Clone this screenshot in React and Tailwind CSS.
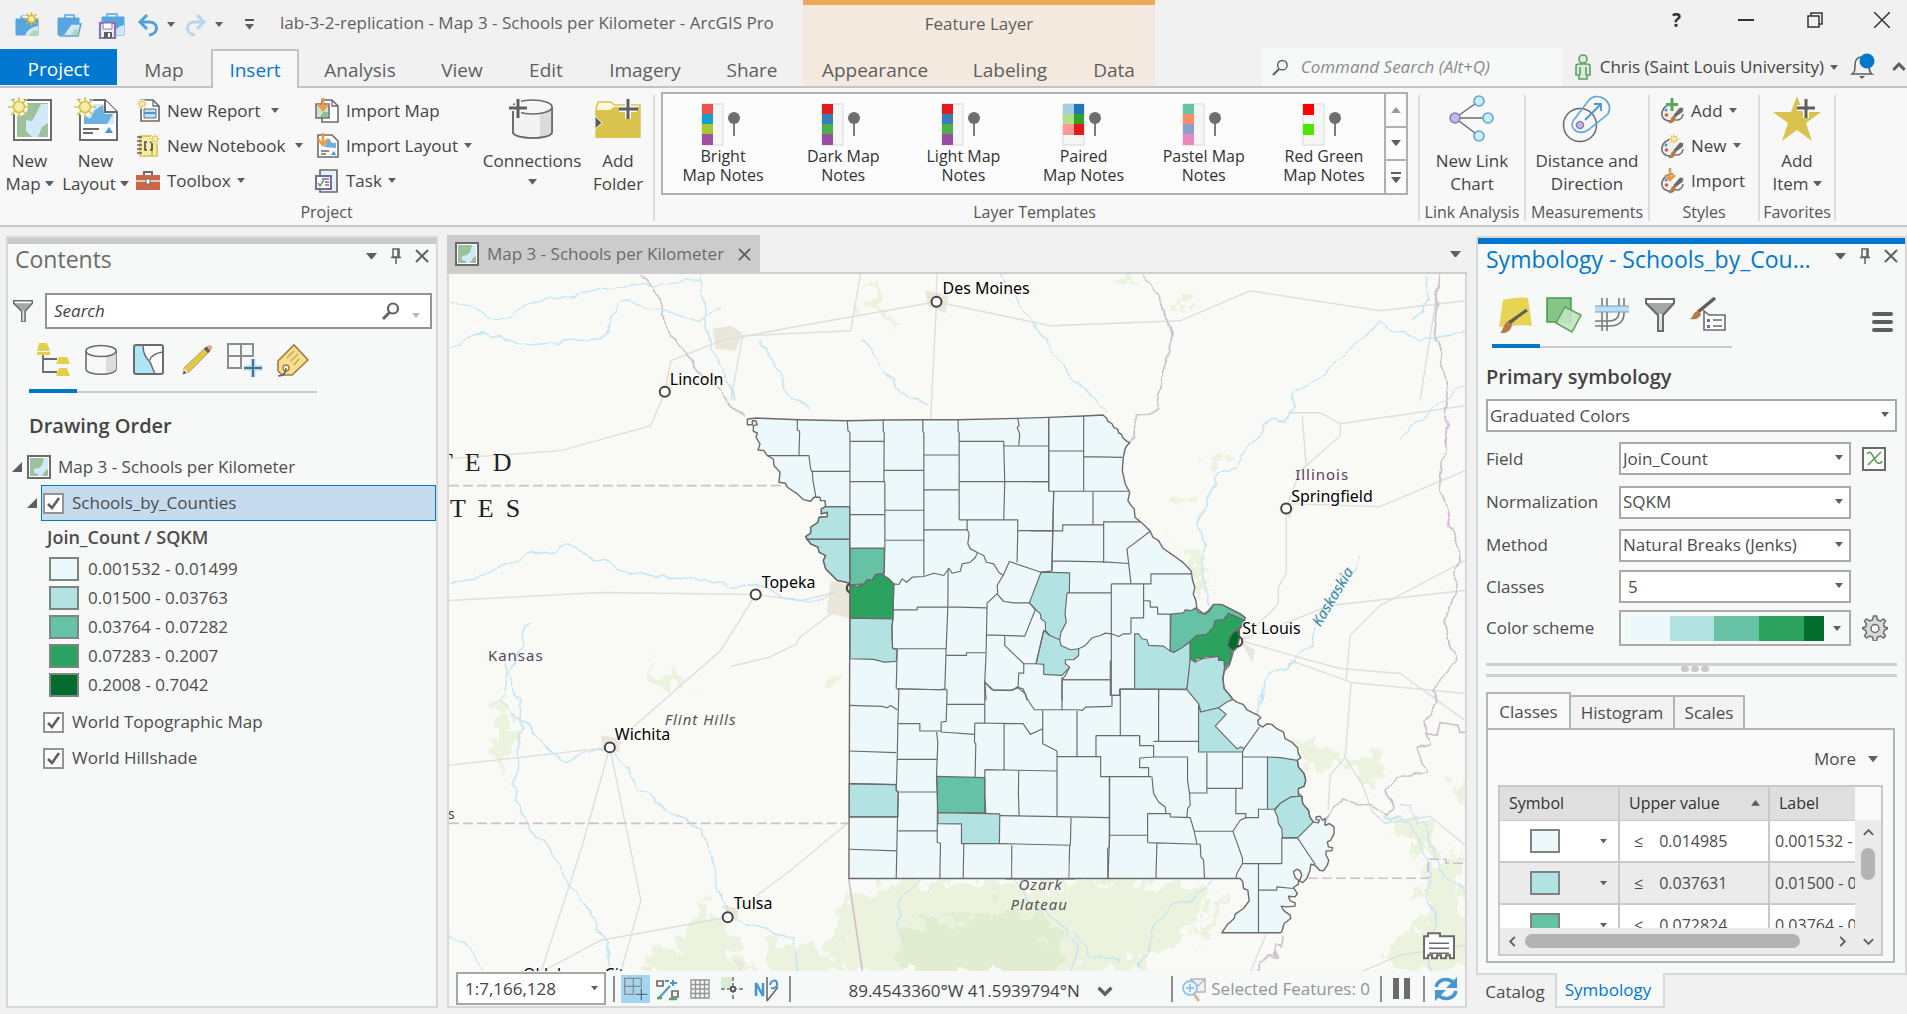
import React from "react";

const UI_FONT = "font-['Open_Sans','Noto_Sans',sans-serif]";

/* ---------- small glyphs ---------- */

const Caret = ({ className = "text-[#5f5f5f]", up = false, size = 8 }) => (
  <svg width={size} height={size * 0.625} viewBox="0 0 8 5" className={"shrink-0 " + className} aria-hidden="true">
    <path d={up ? "M0 5h8L4 0z" : "M0 0h8L4 5z"} fill="currentColor" />
  </svg>
);

const Chevron = ({ turn = "", size = 14, w = 2 }) => (
  <svg width={size} height={size} viewBox="0 0 14 14" className={"shrink-0 text-[#5f5f5f] " + turn} aria-hidden="true">
    <path d="M2 9.5 7 4.500 12 9.500" fill="none" stroke="currentColor" strokeWidth={w} />
  </svg>
);

const CloseX = ({ size = 14, w = 2 }) => (
  <svg width={size} height={size} viewBox="0 0 14 14" className="text-[#5f5f5f]" aria-hidden="true">
    <path d="M1 1 13 13M13 1 1 13" stroke="currentColor" strokeWidth={w} />
  </svg>
);

const Pin = () => (
  <svg width="12" height="16" viewBox="0 0 12 16" className="text-[#5f5f5f]" aria-hidden="true">
    <path d="M3 1h6v8H3zM1 9.500h10M6 10v6M8 1v8" fill="none" stroke="currentColor" strokeWidth="1.500" />
  </svg>
);

const Magnifier = ({ size = 18, w = 2.2 }) => (
  <svg width={size} height={size} viewBox="0 0 18 18" className="shrink-0 text-[#5f5f5f]" aria-hidden="true">
    <circle cx="11" cy="6.500" r="5" fill="none" stroke="currentColor" strokeWidth={w} />
    <path d="M7.500 10.500 1 17" stroke="currentColor" strokeWidth={w + 0.6} />
  </svg>
);

const Sun = ({ x, y, s = 1 }) => (
  <g transform={`translate(${x} ${y}) scale(${s})`}>
    <circle r="9" fill="#f8f8f8" />
    <path d="M0-11V11M-11 0H11M-8-8 8 8M8-8-8 8" stroke="#d9c04a" strokeWidth="1.600" />
    <circle r="5.500" fill="#f6eca9" stroke="#d9c04a" strokeWidth="1.600" />
  </g>
);

/* ---------- quick access icons ---------- */

const ProjectNewIcon = () => (
  <svg width="26" height="26" viewBox="0 0 26 26" aria-hidden="true">
    <path d="M7 7V4h7v3M2 7h22v16H2z" fill="#56a5dd" stroke="#56a5dd" />
    <path d="M8 6V4h6v2z" fill="#f1f1f1" />
    <path d="M11 24c1-5 6-9 13-10v10z" fill="#cfe7f7" />
    <path d="M15 24l4-6 5 1v5z" fill="#b9d6b4" />
    <g transform="translate(17.500 7)">
      <path d="M0-7V7M-7 0H7M-5-5 5 5M5-5-5 5" stroke="#d9b93a" strokeWidth="1.500" />
      <circle r="3.500" fill="#fbeeb0" stroke="#d9b93a" strokeWidth="1.500" />
    </g>
  </svg>
);
const ProjectOpenIcon = () => (
  <svg width="26" height="26" viewBox="0 0 26 26" aria-hidden="true">
    <path d="M9 6V3h9v3" fill="none" stroke="#56a5dd" strokeWidth="1.500" />
    <path d="M2 6h21v6H9L4 23H2z" fill="#56a5dd" stroke="#56a5dd" />
    <path d="M8 12h17l-3 12H4z" fill="#cfe7f7" stroke="#56a5dd" strokeWidth="1.500" />
    <path d="M8 12h8l-8 11H4z" fill="#56a5dd" />
    <path d="M15 23l4-6 4 1-1 5z" fill="#b9d6b4" />
  </svg>
);
const SaveIcon = () => (
  <svg width="28" height="28" viewBox="0 0 28 28" aria-hidden="true">
    <path d="M9 6V3h10v3" fill="none" stroke="#56a5dd" strokeWidth="1.500" />
    <path d="M4 6h22v18H4z" fill="#56a5dd" stroke="#56a5dd" />
    <path d="M15 24c2-6 6-9 11-10v10z" fill="#cfe7f7" />
    <path d="M2 12h15v15H2z" fill="#f1f1f1" stroke="#8c72b5" strokeWidth="2.200" />
    <path d="M5 12h9v6H5z" fill="#fff" stroke="#8c72b5" />
    <path d="M6 21h8v6H6z" fill="#5f5f5f" />
    <path d="M10 22h2v4h-2z" fill="#fff" />
  </svg>
);
const UndoIcon = ({ color, flip }) => (
  <svg width="22" height="24" viewBox="0 0 22 24" className={flip ? "-scale-x-100" : ""} aria-hidden="true">
    <path d="M3 9h9c10 0 10 12 0 13" fill="none" stroke={color} strokeWidth="3" />
    <path d="M10 2 3 9l7 7" fill="none" stroke={color} strokeWidth="3" />
  </svg>
);

/* ---------- ribbon icons ---------- */

const MapPageIcon = ({ size = 44 }) => (
  <svg width={size} height={size} viewBox="0 0 44 44" aria-hidden="true">
    <path d="M6 3h37v40H6z" fill="#fff" stroke="#6b6b6b" strokeWidth="2" />
    <path d="M9 6h31v34H9z" fill="#9cc29d" />
    <path d="M40 7H33l-4 8-5 9-6-1v11l6 6h6l4-10 6-4z" fill="#d3e9f8" />
    <Sun x={11} y={10} />
  </svg>
);
const LayoutPageIcon = ({ size = 44 }) => (
  <svg width={size} height={size} viewBox="0 0 44 44" aria-hidden="true">
    <path d="M6 3h25l12 12v28H6z" fill="#fff" stroke="#6b6b6b" strokeWidth="2" />
    <path d="M10 7h20v9h10v11H10z" fill="#d3e9f8" />
    <path d="M10 18l6 4 5-9 8-5 1 9 9 0-6 10H10z" fill="#69b1e2" />
    <path d="M31 3v12h12" fill="#fff" stroke="#6b6b6b" strokeWidth="2" />
    <path d="M9 32h16M9 36h10" stroke="#6b6b6b" strokeWidth="1.800" />
    <path d="M31 36h8l-4-6z" fill="#4795d1" />
    <Sun x={11} y={10} />
  </svg>
);
const ReportIcon = () => (
  <svg width="25" height="25" viewBox="0 0 25 25" aria-hidden="true">
    <path d="M5 2h12l6 6v15H5z" fill="#fff" stroke="#6b6b6b" strokeWidth="1.700" />
    <path d="M17 2v6h6" fill="none" stroke="#6b6b6b" strokeWidth="1.300" />
    <path d="M8 11h12v9H8z" fill="#bfe0f5" stroke="#6b6b6b" />
    <path d="M8 15h12" stroke="#4795d1" strokeWidth="2" />
    <Sun x={6} y={6} s={0.500} />
  </svg>
);
const NotebookIcon = () => (
  <svg width="25" height="25" viewBox="0 0 25 25" aria-hidden="true">
    <path d="M4 3h17v20H4z" fill="#f6eca9" stroke="#d9c04a" strokeWidth="1.600" />
    <path d="M16 3v20" stroke="#d9c04a" strokeWidth="2" />
    <path d="M1 4h5M1 8h5M1 12h5M1 16h5M1 20h5" stroke="#5f5f5f" strokeWidth="1.600" />
    <path d="M11 9H9v8h2M14 9h2v8h-2" fill="none" stroke="#444" strokeWidth="1.500" />
    <Sun x={19} y={6} s={0.500} />
  </svg>
);
const ToolboxIcon = () => (
  <svg width="26" height="22" viewBox="0 0 26 22" aria-hidden="true">
    <path d="M9 6V2h8v4" fill="none" stroke="#6b6b6b" strokeWidth="2" />
    <path d="M1 5h24v15H1z" fill="#c86848" />
    <path d="M1 11h24" stroke="#f8e4dc" strokeWidth="1.500" />
    <path d="M11 9h4v5h-4z" fill="#fff" stroke="#6b6b6b" />
  </svg>
);
const ImportArrow = () => <path d="M9 0v11M4 6l5 6 5-6" fill="none" stroke="#ea9a45" strokeWidth="2.600" />;
const ImportMapIcon = () => (
  <svg width="26" height="26" viewBox="0 0 26 26" aria-hidden="true">
    <path d="M8 2h10l6 6v16H8z" fill="#fff" stroke="#6b6b6b" strokeWidth="1.600" />
    <path d="M18 2v6h6" fill="none" stroke="#6b6b6b" strokeWidth="1.300" />
    <path d="M2 6h13v14H2z" fill="#cde3cc" stroke="#6b6b6b" strokeWidth="1.500" />
    <path d="M6 19l3-5 5 0v5z" fill="#8fc08f" />
    <ImportArrow />
  </svg>
);
const ImportLayoutIcon = () => (
  <svg width="26" height="26" viewBox="0 0 26 26" aria-hidden="true">
    <path d="M4 2h14l6 6v16H4z" fill="#fff" stroke="#6b6b6b" strokeWidth="1.600" />
    <path d="M10 14l5-9 3 5h4v5z" fill="#69b1e2" />
    <path d="M7 18h8M7 21h5" stroke="#6b6b6b" strokeWidth="1.300" />
    <path d="M17 22h5l-2-4z" fill="#4795d1" />
    <ImportArrow />
  </svg>
);
const TaskIcon = () => (
  <svg width="26" height="26" viewBox="0 0 26 26" aria-hidden="true">
    <path d="M6 2h17v22H6z" fill="#e7f2f9" stroke="#6b6b6b" strokeWidth="1.700" />
    <path d="M2 8h15v13H2z" fill="#fff" stroke="#7b66ad" strokeWidth="2" />
    <path d="M4 15l2 3 4-6" fill="none" stroke="#59a55b" strokeWidth="1.500" />
    <path d="M8 11h7M11 14h4M11 17h4" stroke="#7b66ad" strokeWidth="1.300" />
  </svg>
);
const ConnectionsIcon = () => (
  <svg width="46" height="42" viewBox="0 0 46 42" aria-hidden="true">
    <path d="M4 9v25c0 8 39 8 39 0V9" fill="#f3f3f3" stroke="#6b6b6b" strokeWidth="1.700" />
    <path d="M31 15v24c8-1 12-3 12-5V9c0 3-5 5-12 6z" fill="#dcdcdc" />
    <ellipse cx="23.500" cy="9" rx="19.500" ry="7" fill="#f6f6f6" stroke="#6b6b6b" strokeWidth="1.700" />
    <path d="M4 9v25c0 8 39 8 39 0V9" fill="none" stroke="#6b6b6b" strokeWidth="1.700" />
    <path d="M9 2v17M1 10h17" stroke="#f8f8f8" strokeWidth="6" />
    <path d="M9 1v19M0 10h18" stroke="#5f5f5f" strokeWidth="3" />
  </svg>
);
const FolderIcon = () => (
  <svg width="48" height="42" viewBox="0 0 48 42" aria-hidden="true">
    <path d="M2 11l2-7h13l3 3h26v32H2z" fill="#fdf9e3" stroke="#d9c34c" strokeWidth="1.500" />
    <path d="M2 12h14l4-3h26v31H2z" fill="#d9c34c" />
    <path d="M1 18v13l7-6z" fill="#5f5f5f" stroke="#f8f8f8" />
    <path d="M34 2v19M25 11h18" stroke="#f8f8f8" strokeWidth="6" />
    <path d="M34 1v20M25 11h19" stroke="#5f5f5f" strokeWidth="3" />
  </svg>
);
const LinkChartIcon = () => (
  <svg width="46" height="48" viewBox="0 0 46 48" aria-hidden="true">
    <path d="M6 23 30 6M6 23h32M6 23l24 18" stroke="#6b6b6b" strokeWidth="1.500" />
    <circle cx="6" cy="23" r="5" fill="#c4b8e0" stroke="#8c7bbd" strokeWidth="1.500" />
    <g fill="#d3ebf9" stroke="#5aa7dc" strokeWidth="1.600">
      <circle cx="30" cy="6" r="5" />
      <circle cx="39" cy="23" r="5" />
      <circle cx="30" cy="41" r="5" />
    </g>
  </svg>
);
const DistanceIcon = () => (
  <svg width="50" height="50" viewBox="0 0 50 50" aria-hidden="true">
    <circle cx="18" cy="31" r="16.500" fill="none" stroke="#6b6b6b" strokeWidth="1.500" />
    <path d="M11 27 27 6c8-9 26 1 19 14L26 36c-9 6-19-1-15-9z" fill="none" stroke="#5aa7dc" strokeWidth="1.600" />
    <circle cx="18" cy="31" r="3.500" fill="#c4b8e0" stroke="#8c7bbd" strokeWidth="1.600" />
    <path d="M23 26 39 10M32 10h7v7" fill="none" stroke="#4795d1" strokeWidth="1.800" />
  </svg>
);
const PaletteIcon = ({ kind }) => (
  <svg width="25" height="26" viewBox="0 0 25 26" aria-hidden="true">
    <path d="M14 23C5 24 1 20 2 14 3 9 8 6 13 6" fill="#efefef" stroke="#6b6b6b" strokeWidth="1.600" />
    <circle cx="6" cy="12" r="1.500" fill="#4795d1" />
    <circle cx="6.500" cy="17" r="1.800" fill="#d1633f" />
    <path d="M13 17 20 9l4 1-1 4-8 6z" fill="#6b6b6b" stroke="#f8f8f8" strokeWidth=".8" />
    <path d="M15 22c5 1 8-3 8-6" fill="none" stroke="#6b6b6b" strokeWidth="1.400" />
    <path d="M14 17l-3 3c0 3-1 4-3 5 5 1 7-2 8-6z" fill="#b17c48" />
    {kind === "add" && <path d="M12 0v13M6 6.500h12" stroke="#59a55b" strokeWidth="3" />}
    {kind === "new" && <Sun x={14} y={6} s={0.500} />}
    {kind === "import" && <path d="M10 0v11M5 7l5 5 5-5" fill="none" stroke="#ea9a45" strokeWidth="2.600" />}
  </svg>
);
const StarIcon = () => (
  <svg width="48" height="48" viewBox="0 0 48 48" aria-hidden="true">
    <path d="M24 1l6 16h18L33 28l6 18-15-11L9 46l6-18L0 17h18z" fill="#d9c34c" />
    <path d="M33 5v18M24 13h18" stroke="#f8f8f8" strokeWidth="6" />
    <path d="M33 4v19M24 13h18" stroke="#5f5f5f" strokeWidth="3" />
  </svg>
);
const NotesIcon = ({ left, right }) => (
  <svg width="44" height="44" viewBox="0 0 44 44" aria-hidden="true">
    <path d="M1 1h21v41H1z" fill="#f6f6f6" stroke="#e2e2e2" strokeWidth="1.500" />
    {left.map((c, i) => c && <rect key={c} x="1" y={1 + i * 10} width="11" height="11" fill={c} />)}
    {right.map((c, i) => <rect key={c} x="12" y={1 + i * 10} width="10" height="11" fill={c} />)}
    <circle cx="33" cy="15" r="6" fill="#6d6e71" />
    <path d="M33 15v18" stroke="#6d6e71" strokeWidth="1.800" />
  </svg>
);

/* ---------- shared panel icons ---------- */

const MapThumb = () => (
  <svg width="24" height="24" viewBox="0 0 24 24" className="shrink-0" aria-hidden="true">
    <path d="M1 1h22v22H1z" fill="#fff" stroke="#6b6b6b" strokeWidth="2" />
    <path d="M3 3h18v18H3z" fill="#9cc29d" />
    <path d="M21 3h-4l-2 7-3 3-5 1v4l4 1v2h4l3-5 3-2z" fill="#d3e9f8" />
  </svg>
);
const Funnel = ({ size = 26 }) => (
  <svg width={size} height={(size * 34) / 30} viewBox="0 0 30 34" className="shrink-0" aria-hidden="true">
    <path d="M1 1h28v4L18 17v16h-5V17L1 5z" fill="#fff" stroke="#6b6b6b" strokeWidth="2" />
    <path d="M2 5h26L18 16h-5z" fill="#a5a7ab" />
    <path d="M13 17h5v15h-5z" fill="#e2e2e2" />
    <path d="M1 1h28v4L18 17v16h-5V17L1 5z" fill="none" stroke="#6b6b6b" strokeWidth="2" />
  </svg>
);

/* ---------- contents tabs ---------- */

const OrderIcon = () => (
  <svg width="36" height="36" viewBox="0 0 36 36" aria-hidden="true">
    <path d="M8 11v19h14M8 17h14" fill="none" stroke="#6b6b6b" strokeWidth="1.800" />
    <path d="M4 1h8l3 8H2zM2 10h13v3H2zM24 15h8l3 7H21zM24 26h8l3 8H21z" fill="#e3cf4e" />
  </svg>
);
const SourceIcon = () => (
  <svg width="32" height="32" viewBox="0 0 32 32" aria-hidden="true">
    <path d="M1 7v18c0 7 30 7 30 0V7" fill="#f8f8f8" stroke="#6b6b6b" strokeWidth="1.600" />
    <path d="M21 11v18c7-1 10-3 10-4V7c0 2-4 4-10 4z" fill="#dcdcdc" />
    <ellipse cx="16" cy="7" rx="15" ry="5.500" fill="#f8f8f8" stroke="#6b6b6b" strokeWidth="1.600" />
  </svg>
);
const SelectionIcon = () => (
  <svg width="32" height="32" viewBox="0 0 32 32" aria-hidden="true">
    <rect x="1" y="1" width="29" height="29" rx="2" fill="#fbfbfb" />
    <path d="M2 2h8c0 8 3 12 7 16l5 12H2z" fill="#afe6f6" />
    <path d="M10 1c0 9 3 13 7 17l5 12M17 16c1-4 6-7 13-8" fill="none" stroke="#6b6b6b" strokeWidth="1.500" />
    <rect x="1" y="1" width="29" height="29" rx="2" fill="none" stroke="#6b6b6b" strokeWidth="2" />
  </svg>
);
const PencilIcon = () => (
  <svg width="32" height="32" viewBox="0 0 32 32" aria-hidden="true">
    <path d="M3 24 25 3l4 4L8 28l-6 2z" fill="#dfc84c" stroke="#a98f3b" strokeWidth=".8" />
    <path d="M23 5l3-3 4 4-3 3z" fill="#5f5f5f" />
    <path d="M26 3l2-2c2 0 4 2 3 4l-2 2z" fill="#eba29a" />
    <path d="M3 24l5 4-6 2z" fill="#f2d8b0" />
    <path d="M2 30l1-3 2 2z" fill="#333" />
  </svg>
);
const SnapIcon = ({ size = 36 }) => (
  <svg width={size} height={size} viewBox="0 0 36 36" aria-hidden="true">
    <path d="M1 2h25v12H1zM1 2v24h13V2" fill="none" stroke="#8e8e8e" strokeWidth="2" />
    <path d="M26 17v18M17 26h18" stroke="#a9dbf7" strokeWidth="5" />
    <path d="M26 17v18M17 26h18" stroke="#4a6f8a" strokeWidth="2" />
  </svg>
);
const TagIcon = () => (
  <svg width="34" height="34" viewBox="0 0 34 34" aria-hidden="true">
    <path d="M2 18 18 2l14 15-16 15H6l-4-4z" fill="#f4e08e" stroke="#a9793c" strokeWidth="1.600" />
    <path d="M11 15l7-7M15 18l7-7M18 22l5-6" stroke="#cf9c62" strokeWidth="1.300" />
    <circle cx="10" cy="25" r="3" fill="#fff" stroke="#a9793c" strokeWidth="1.400" />
    <path d="M10 25c0 6-4 8-8 8" fill="none" stroke="#5f5f5f" strokeWidth="1.500" />
  </svg>
);

/* ---------- symbology tabs ---------- */

const PrimaryIcon = () => (
  <svg width="36" height="36" viewBox="0 0 36 36" aria-hidden="true">
    <path d="M5 3c8-2 17-3 25-2l4 28c-10-2-20 0-33 1z" fill="#e8d454" />
    <path d="M29 13 12 28l-3-3z" fill="#5f5f5f" />
    <path d="M29 13 12 25" stroke="#5f5f5f" strokeWidth="3" />
    <path d="M11 25c-6 0-5 8-9 11 6 1 11-2 12-8z" fill="#b17c48" />
  </svg>
);
const VaryIcon = () => (
  <svg width="38" height="36" viewBox="0 0 38 36" aria-hidden="true">
    <path d="M2 1h24v24H2z" fill="#86c487" stroke="#3f9a4b" strokeWidth="1.500" />
    <path d="M20 10 36 18 27 35 11 26z" fill="#c3e3c2" fillOpacity=".9" stroke="#59a55b" strokeWidth="1.500" />
  </svg>
);
const LayerDrawIcon = () => (
  <svg width="36" height="36" viewBox="0 0 36 36" aria-hidden="true">
    <path d="M8 1v33M13 1v33M25 1v14q0 9-11 9H1M30 1v15q0 13-15 13H1" fill="none" stroke="#7a7a7a" strokeWidth="1.600" />
    <path d="M1 9h34v6H1z" fill="#b9def5" />
    <path d="M1 9h34M1 15h34" stroke="#7a9fb8" strokeWidth="1" />
  </svg>
);
const LegendBrushIcon = () => (
  <svg width="38" height="36" viewBox="0 0 38 36" aria-hidden="true">
    <path d="M26 1 9 15" stroke="#5f5f5f" strokeWidth="3.500" />
    <path d="M10 14c-6 0-5 5-9 8 6 1 10-1 11-5z" fill="#b17c48" />
    <path d="M15 14v19h21V18H20z" fill="#fff" stroke="#6b6b6b" strokeWidth="1.600" />
    <path d="M24 23h9M24 29h9" stroke="#6b6b6b" strokeWidth="1.400" />
    <path d="M18 22h3v3h-3zM18 28h3v3h-3z" fill="#7b66ad" />
  </svg>
);

/* ---------- ribbon building blocks ---------- */

const BigButton = ({ icon, lines, drop, className = "" }) => (
  <button className={"flex shrink-0 flex-col items-center text-[17px] leading-[23px] text-[#444] " + className}>
    <span className="mb-[6px] flex h-[48px] items-center justify-center">{icon}</span>
    <span>{lines[0]}</span>
    {lines[1] ? (
      <span className="flex items-center gap-1">
        {lines[1]}
        {drop && <Caret size={9} />}
      </span>
    ) : (
      <span className="flex h-[20px] items-center"><Caret size={9} /></span>
    )}
  </button>
);

const SmallButton = ({ icon, label, drop, wide }) => (
  <button className="flex h-[35px] items-center gap-[6px] text-[17px] text-[#444]">
    <span className="flex w-[26px] justify-center">{icon}</span>
    <span className="whitespace-nowrap">{label}</span>
    {drop && <Caret className={wide ? "ml-1 text-[#5f5f5f]" : "text-[#5f5f5f]"} />}
  </button>
);

const Group = ({ label, children, className = "", bodyClass = "" }) => (
  <section className={"mt-[7px] mb-[4px] flex flex-col border-r-2 border-[#dcdcdc] " + className}>
    <div className={"flex min-h-0 flex-1 " + bodyClass}>{children}</div>
    <h2 className="h-[18px] text-center text-base leading-[18px] whitespace-nowrap text-[#555]">{label}</h2>
  </section>
);

const GALLERY = [
  { lines: ["Bright", "Map Notes"], left: ["#f05050", "#149fd1", "#a8c82f", "#a050a0"], right: [] },
  { lines: ["Dark Map", "Notes"], left: ["#e41a1c", "#377eb8", "#4daf4a", "#984ea3"], right: [] },
  { lines: ["Light Map", "Notes"], left: ["#e41a1c", "#377eb8", "#4daf4a", "#984ea3"], right: [] },
  { lines: ["Paired", "Map Notes"], left: ["#a6cee3", "#b2df8a", "#fb9a99"], right: ["#1f78b4", "#33a02c", "#e31a1c"] },
  { lines: ["Pastel Map", "Notes"], left: ["#66c2a5", "#fc8d62", "#8da0cb", "#e78ac3"], right: [] },
  { lines: ["Red Green", "Map Notes"], left: ["#ff0000", null, "#4ce600"], right: [] },
];

/* ---------- header ---------- */

const TABS = [
  ["Map", "w-[94px]"],
  ["Insert", "w-[88px]"],
  ["Analysis", "w-[122px]"],
  ["View", "w-[82px]"],
  ["Edit", "w-[86px]"],
  ["Imagery", "w-[112px]"],
  ["Share", "w-[102px]"],
];

function Header() {
  return (
    <header className="flex h-[88px] bg-[#f1f1f1] text-[#5f5f5f]">
      <div className="flex w-[803px] shrink-0 flex-col">
        <div className="flex h-[49px] items-center pl-[14px]">
          <button aria-label="New project" className="w-[42px]"><ProjectNewIcon /></button>
          <button aria-label="Open project" className="w-[42px]"><ProjectOpenIcon /></button>
          <button aria-label="Save project" className="w-[39px]"><SaveIcon /></button>
          <button aria-label="Undo" className="flex w-[48px] items-center gap-[8px]"><UndoIcon color="#4f9fd9" /><Caret /></button>
          <button aria-label="Redo" className="flex w-[60px] items-center gap-[8px]"><UndoIcon color="#b9d7ec" flip /><Caret /></button>
          <button aria-label="Customize toolbar" className="flex w-[35px] flex-col gap-[3px]">
            <span className="h-[2px] w-[9px] bg-[#555]" />
            <Caret size={9} />
          </button>
          <h1 className="pb-1 text-[17px] whitespace-nowrap">lab-3-2-replication - Map 3 - Schools per Kilometer - ArcGIS Pro</h1>
        </div>
        <nav className="flex flex-1 border-b-2 border-[#c3c3c3] text-[19px]">
          <button className="mb-px w-[117px] bg-[#0078d0] pt-1 text-white">Project</button>
          {TABS.map(([t, w]) =>
            t === "Insert" ? (
              <button key={t} className={w + " -mb-[2px] border-2 border-b-0 border-[#c3c3c3] bg-[#f8f8f8] pt-[2px] text-[#0078d0]"}>{t}</button>
            ) : (
              <button key={t} className={w + " pt-[6px]"}>{t}</button>
            )
          )}
        </nav>
      </div>
      <div className="flex w-[352px] shrink-0 flex-col border-t-[5px] border-[#f0a858] bg-[#f3e9de]">
        <div className="flex h-[44px] items-center justify-center pb-[6px] text-[17px]">Feature Layer</div>
        <nav className="flex flex-1 border-b-2 border-[#c3c3c3] text-[19px]">
          <button className="w-[144px] pt-[6px]">Appearance</button>
          <button className="w-[126px] pt-[6px]">Labeling</button>
          <button className="w-[82px] pt-[6px]">Data</button>
        </nav>
      </div>
      <div className="flex min-w-0 flex-1 flex-col">
        <div className="flex h-[48px] items-center justify-end pb-2">
          <button aria-label="Help" className="w-[69px] text-[19px] font-bold text-[#333]">?</button>
          <button aria-label="Minimize" className="flex w-[69px] justify-center"><span className="h-[2px] w-4 bg-[#333]" /></button>
          <button aria-label="Restore" className="flex w-[69px] justify-center">
            <svg width="16" height="16" viewBox="0 0 16 16"><path d="M1 4h11v11H1zM4 4V1h11v11h-3" fill="none" stroke="#333" strokeWidth="1.500" /></svg>
          </button>
          <button aria-label="Close" className="flex w-[58px] justify-center pl-[8px]">
            <svg width="16" height="16" viewBox="0 0 16 16"><path d="M0 0l16 16M16 0 0 16" stroke="#333" strokeWidth="1.500" /></svg>
          </button>
        </div>
        <div className="flex flex-1 items-start justify-end border-b-2 border-[#c3c3c3] text-[17px]">
          <label className="flex h-[38px] w-[300px] items-center gap-3 bg-[#f7f9f8] pl-[10px]">
            <Magnifier size={17} w={1.6} />
            <input aria-label="Command Search" placeholder="Command Search (Alt+Q)" className="w-full min-w-0 bg-transparent italic outline-none placeholder:text-[#8a8a8a]" />
          </label>
          <button className="ml-[12px] flex h-[38px] items-center text-[#444]">
            <svg width="18" height="26" viewBox="0 0 18 26" className="mr-2" aria-hidden="true">
              <circle cx="9" cy="5" r="4" fill="#d9ecd6" stroke="#5f9f63" strokeWidth="1.600" />
              <path d="M2 12q0-2 3-2h8q3 0 3 2v9h-3v4H5v-4H2zM6 13v8M12 13v8" fill="#d9ecd6" stroke="#5f9f63" strokeWidth="1.600" />
            </svg>
            <span className="mr-[6px] whitespace-nowrap">Chris (Saint Louis University)</span>
            <Caret />
          </button>
          <button aria-label="Notifications" className="ml-3 flex h-[36px] items-center">
            <svg width="26" height="28" viewBox="0 0 26 28">
              <path d="M2 22h20c-3-2-3-5-3-9 0-6-2-8-7-8s-7 3-7 8 0 7-3 9z" fill="none" stroke="#5f5f5f" strokeWidth="1.500" />
              <path d="M9 24h6l-3 3z" fill="#5f5f5f" />
              <circle cx="17" cy="9" r="7.500" fill="#007ac8" />
            </svg>
          </button>
          <button aria-label="Collapse ribbon" className="ml-[15px] flex h-[38px] items-center"><Chevron size={16} w={2.6} /></button>
        </div>
      </div>
    </header>
  );
}

/* ---------- ribbon ---------- */

function Ribbon() {
  return (
    <div className="flex h-[139px] overflow-hidden border-b-2 border-[#c8c8c8] bg-[#f8f8f8]">
      <Group label="Project" className="w-[655px] shrink-0">
        <BigButton className="w-[59px]" icon={<MapPageIcon />} lines={["New", "Map"]} drop />
        <BigButton className="w-[73px]" icon={<LayoutPageIcon />} lines={["New", "Layout"]} drop />
        <div className="-mt-[2px] flex w-[179px] shrink-0 flex-col pl-[3px]">
          <SmallButton icon={<ReportIcon />} label="New Report" drop wide />
          <SmallButton icon={<NotebookIcon />} label="New Notebook" drop wide />
          <SmallButton icon={<ToolboxIcon />} label="Toolbox" drop />
        </div>
        <div className="-mt-[2px] flex w-[168px] shrink-0 flex-col pl-[3px]">
          <SmallButton icon={<ImportMapIcon />} label="Import Map" />
          <SmallButton icon={<ImportLayoutIcon />} label="Import Layout" drop />
          <SmallButton icon={<TaskIcon />} label="Task" drop />
        </div>
        <BigButton className="w-[106px]" icon={<ConnectionsIcon />} lines={["Connections"]} />
        <BigButton className="w-[66px]" icon={<FolderIcon />} lines={["Add", "Folder"]} />
      </Group>
      <Group label="Layer Templates" className="min-w-0 max-w-[765px] flex-1 pr-[10px] pl-[6px]">
        <div className="-mt-[3px] flex h-[103px] w-full border-2 border-[#b0b0b0] bg-[#fcfcfc]">
          <div className="grid min-w-0 flex-1 grid-cols-6 overflow-hidden">
            {GALLERY.map((g) => (
              <button key={g.lines.join(" ")} className="flex flex-col items-center pt-[9px] text-base leading-[19px] whitespace-nowrap text-[#333]">
                <NotesIcon left={g.left} right={g.right} />
                <span>{g.lines[0]}</span>
                <span>{g.lines[1]}</span>
              </button>
            ))}
          </div>
          <div className="flex w-[22px] flex-col divide-y-2 divide-[#b0b0b0] border-l-2 border-[#b0b0b0]">
            <button aria-label="Previous templates" className="flex flex-1 items-center justify-center"><Caret up size={10} className="text-[#999]" /></button>
            <button aria-label="Next templates" className="flex flex-1 items-center justify-center"><Caret size={10} /></button>
            <button aria-label="All templates" className="flex flex-1 flex-col items-center justify-center gap-[3px]">
              <span className="h-[2px] w-[10px] bg-[#5f5f5f]" />
              <Caret size={10} />
            </button>
          </div>
        </div>
      </Group>
      <Group label="Link Analysis" className="w-[106px] shrink-0" bodyClass="justify-center">
        <BigButton icon={<LinkChartIcon />} lines={["New Link", "Chart"]} />
      </Group>
      <Group label="Measurements" className="w-[124px] shrink-0" bodyClass="justify-center">
        <BigButton icon={<DistanceIcon />} lines={["Distance and", "Direction"]} />
      </Group>
      <Group label="Styles" className="w-[110px] shrink-0" bodyClass="-mt-[2px] flex-col pl-[9px]">
        <SmallButton icon={<PaletteIcon kind="add" />} label="Add" drop />
        <SmallButton icon={<PaletteIcon kind="new" />} label="New" drop />
        <SmallButton icon={<PaletteIcon kind="import" />} label="Import" />
      </Group>
      <Group label="Favorites" className="w-[76px] shrink-0" bodyClass="justify-center">
        <BigButton icon={<StarIcon />} lines={["Add", "Item"]} drop />
      </Group>
    </div>
  );
}

/* ---------- panes ---------- */

const PaneButtons = () => (
  <div className="flex h-[24px] items-center gap-[13px]">
    <button aria-label="Pane options"><Caret size={11} /></button>
    <button aria-label="Auto hide"><Pin /></button>
    <button aria-label="Close pane"><CloseX /></button>
  </div>
);

const IconTabs = ({ items }) => (
  <div className="flex items-end">
    {items.map(([label, icon], i) => (
      <button key={label} aria-label={label} className={"flex h-[52px] w-[48px] items-start justify-center " + (i === 0 ? "border-b-4 border-[#0079c8]" : "border-b-2 border-[#cacaca]")}>
        <span className="flex h-[38px] items-center">{icon}</span>
      </button>
    ))}
  </div>
);

const Check = ({ label, className = "" }) => (
  <label className={"flex items-center gap-[8px] " + className}>
    <span className="relative flex h-[21px] w-[21px]">
      <input type="checkbox" defaultChecked className="peer h-[21px] w-[21px] appearance-none border-2 border-[#949494] bg-white" />
      <svg viewBox="0 0 21 21" className="pointer-events-none absolute inset-0 hidden peer-checked:block" aria-hidden="true">
        <path d="M5 11l4 4 7-10" fill="none" stroke="#5f5f5f" strokeWidth="2.600" />
      </svg>
    </span>
    {label}
  </label>
);

const Expander = () => (
  <svg width="10" height="10" viewBox="0 0 10 10" className="shrink-0" aria-hidden="true"><path d="M10 0v10H0z" fill="#5f5f5f" /></svg>
);

const CLASSES = [
  ["bg-[#ecf8fa]", "0.001532 - 0.01499", "0.014985"],
  ["bg-[#b2e2e2]", "0.01500 - 0.03763", "0.037631"],
  ["bg-[#66c2a4]", "0.03764 - 0.07282", "0.072824"],
  ["bg-[#2ca25f]", "0.07283 - 0.2007", "0.2007"],
  ["bg-[#006d2c]", "0.2008 - 0.7042", "0.7042"],
];

function Contents() {
  return (
    <aside className="flex w-[432px] shrink-0 flex-col border-2 border-[#d8d8d8] bg-[#f7f9f8] text-[17px] text-[#4c4c4c]">
      <div className="h-[6px] shrink-0 bg-[#cacaca]" />
      <div className="flex h-[49px] justify-between pr-[7px] pl-[7px]">
        <h2 className="text-[23px] leading-[30px] text-[#6b6b6b]">Contents</h2>
        <PaneButtons />
      </div>
      <div className="flex items-center gap-3 pr-1 pl-[5px]">
        <Funnel size={20} />
        <div className="flex h-[36px] min-w-0 flex-1 items-center border-2 border-[#949494] bg-white pr-[10px] pl-[7px]">
          <input aria-label="Search" placeholder="Search" className="min-w-0 flex-1 italic outline-none placeholder:text-[#444]" />
          <button aria-label="Run search" className="mr-[12px]"><Magnifier /></button>
          <button aria-label="Search options" className="pt-2"><Caret className="text-[#bbb]" /></button>
        </div>
      </div>
      <div className="pt-[12px] pl-[21px]">
        <IconTabs items={[["List by drawing order", <OrderIcon key="a" />], ["List by source", <SourceIcon key="b" />], ["List by selection", <SelectionIcon key="c" />], ["List by editing", <PencilIcon key="d" />], ["List by snapping", <SnapIcon key="e" />], ["List by labeling", <TagIcon key="f" />]]} />
      </div>
      <h3 className="pt-[18px] pl-[21px] text-[20px] leading-[30px] font-semibold text-[#444]">Drawing Order</h3>
      <div className="mt-[8px] flex h-[36px] items-center gap-[5px] pl-[4px]">
        <Expander />
        <MapThumb />
        <span className="pl-[2px]">Map 3 - Schools per Kilometer</span>
      </div>
      <div className="flex h-[36px] items-center gap-[4px] pl-[19px]">
        <Expander />
        <Check label="Schools_by_Counties" className="h-full flex-1 border border-[#0079c8] bg-[#c6dbee] pl-px" />
      </div>
      <h4 className="pl-[39px] text-[18px] leading-[33px] font-semibold">Join_Count / SQKM</h4>
      <ul>
        {CLASSES.map(([bg, label]) => (
          <li key={label} className="flex h-[29px] items-center gap-[9px] pl-[41px]">
            <span className={"h-[24px] w-[30px] border-2 border-[#7d8583] " + bg} />
            {label}
          </li>
        ))}
      </ul>
      <div className="pt-[5px] pl-[35px]">
        <Check label="World Topographic Map" className="h-[36px]" />
        <Check label="World Hillshade" className="h-[36px]" />
      </div>
    </aside>
  );
}

/* ---------- map drawing ---------- */

// Every county sheet has its own origin on a shared grid of a third of a unit.
const shift = (dx, dy, pts) =>
  pts.trim().split(/\s+/).map((p) => {
    const [x, y] = p.split(",").map(Number);
    return `${x + dx},${y + dy}`;
  }).join(" ");

const OUTLINE = [
  shift(0, 0, "50,55 78,52 202,57 350,60 458,58 577,57 683,57 860,53 955,50 1060,46 1118,43"),
  shift(900, 0, "228,52 233,62 246,70 250,80 262,85 265,97 273,100 278,112 290,122 298,125 285,142 279,170 276,210 285,250 298,275 293,300 300,312 312,325 314,350 340,372 360,392 368,410 385,420 398,443 430,465 460,487 483,512 487,540 494,560 489,580 497,600 500,624 520,640 535,630 550,612 575,612 600,625 630,640 645,652 640,665 632,680 625,690 628,710 622,740 610,752 605,770 597,795 583,810 578,835 582,865 600,885 608,897"),
  shift(1050, 780, "470,125 490,133 500,148 520,158 535,165 542,172 533,180 535,192 548,200 560,190 575,192 590,205 610,215 615,235 635,245 652,262 655,280 662,292 652,300 655,320 672,340 677,360 672,378 655,385 655,400 665,408 668,430 685,450 690,472 700,485 715,488 718,480 708,478 708,470 720,468 727,480 735,475 735,495 748,490 762,500 762,520 752,540 742,545 745,560 758,562 755,572 738,572 738,585 746,600 742,615 730,632 718,630 705,615 692,612 690,630 680,655 668,667 658,662 665,645 660,632 650,627 640,635 645,652 655,660 655,672 640,682 652,700 645,710 625,708 630,722 645,728 645,738 620,740 603,738 612,752 630,765 632,775 612,790 605,815 600,818 425,818 440,795 462,775 465,762 490,745 507,722 503,690 490,685 488,665 480,655 467,655"),
  shift(0, 0, "355,1435 358,550 345,545 320,540 300,520 285,505 278,480 285,465 265,455 262,440 240,430 225,408 240,398 240,380 262,365 265,350 290,348 290,335 272,340 272,325 285,318 283,300 270,300 268,290 250,290 240,302 218,297 200,280 170,260 165,248 145,245 148,215 130,195 128,175 110,165 100,150 82,148 88,130 76,110 80,97 68,92 68,75 80,72 75,60 65,60 65,72 50,72"),
].join(" ");

const SHADED = [
  ["#b2e2e2", shift(0, 0, "285,318 357,318 357,416 228,416 225,408 240,398 240,380 262,365 265,350 290,348 290,335 272,340 272,325")],
  ["#b2e2e2", shift(0, 0, "228,416 357,416 357,548 345,545 320,540 300,520 285,505 278,480 285,465 265,455 262,440 240,430")],
  ["#66c2a4", shift(0, 0, "358,443 461,443 461,520 455,520 435,522 425,540 410,538 400,550 358,553")],
  ["#2ca25f", shift(0, 0, "358,553 380,558 400,550 410,538 425,540 435,522 455,520 465,530 475,535 490,550 487,655 358,653")],
  ["#b2e2e2", shift(0, 0, "358,653 487,655 484,680 486,743 500,748 497,783 460,785 430,777 358,775")],
  ["#b2e2e2", shift(900, 0, "32,515 118,517 117,577 110,577 104,640 108,665 92,695 88,718 70,715 58,705 45,690 45,665 32,655 30,640 15,627 -3,607")],
  ["#b2e2e2", shift(900, 0, "40,690 58,705 88,718 92,735 120,748 145,745 145,765 130,778 105,778 105,790 118,800 95,825 40,822 40,792 17,790")],
  ["#b2e2e2", shift(900, 0, "313,700 325,700 335,715 350,718 355,735 400,737 420,752 432,755 480,725 480,790 470,868 313,866")],
  ["#66c2a4", shift(900, 0, "422,641 460,637 465,628 485,630 495,622 505,635 525,642 540,630 550,612 575,612 600,625 630,640 645,652 640,662 620,650 595,640 580,658 555,660 550,680 530,702 500,705 480,722 455,742 432,755 420,752")],
  ["#b2e2e2", shift(900, 0, "480,775 495,785 515,775 565,768 565,780 582,780 583,802 578,830 582,865 608,897 590,905 565,922 512,935 505,910 470,868")],
  ["#2ca25f", shift(900, 0, "595,638 620,650 645,662 632,680 615,688 600,710 592,735 605,755 600,785 583,802 582,780 565,780 565,768 525,768 515,775 500,773 495,785 480,775 480,722 500,705 530,702 550,680 555,660 580,658")],
  ["#006d2c", shift(900, 0, "610,695 628,685 628,705 620,740 608,752 592,735 600,708")],
  ["#66c2a4", shift(300, 780, "318,348 463,352 463,400 466,458 322,457")],
  ["#b2e2e2", shift(300, 780, "322,457 508,461 507,550 393,550 393,491 322,490")],
  ["#b2e2e2", shift(300, 780, "56,370 197,373 197,390 203,395 202,470 56,470")],
  ["#b2e2e2", shift(1050, 780, "362,155 415,142 438,162 405,197 470,265 482,260 492,265 487,275 355,275 355,135")],
  ["#b2e2e2", shift(1050, 780, "562,290 600,292 652,300 655,320 672,340 677,360 672,378 655,385 655,408 632,410 600,430 583,447 562,447")],
  ["#b2e2e2", shift(1050, 780, "583,450 600,430 632,410 665,408 668,430 685,450 690,472 700,485 680,505 652,533 607,533 605,505 595,490 592,470")],
];

const COUNTY_LINES = [
  ["", "M200,57V88L207,92 205,165M110,165H235L240,205 245,212 247,240 256,290M242,212H357M350,60L352,90 358,95V545M458,58V92L461,95 460,240 463,245V440L461,520M577,57V92L580,97V525M683,57V92L686,95V358M862,53L866,75 860,80 868,100 865,135M955,50V272M358,122H460M358,243H463M358,342H463M358,443H461M461,209H580M463,329H580M463,419H580M580,163H686M580,268L686,267M580,388H710M686,122H820V136H955M820,136L823,243 820,358M686,243H955M686,358H862V392L860,485M862,390H970M970,272L965,512M285,318H357M228,416H357M710,360V385L716,400 712,430 720,445 745,458 760,465 768,485 790,490 805,515 818,525M358,553L380,558 400,550 410,538 425,540 435,522 455,520 475,535 490,550 505,552 515,535 528,545 545,530 580,528 610,518 640,525 655,503 665,518 690,512 695,490 720,485 735,470 740,458M490,550L487,655 484,680 486,743 500,748 497,865M487,628H560V620H650M653,503L652,620 647,745 643,865M486,745H647M653,619L768,622M837,483L818,525 800,555 802,578 770,608 767,755M800,580L820,603 850,607 897,607 915,627 883,707 768,703M837,483L932,515M823,707V735L880,790M940,690L917,790M647,765H708V757H767L763,845 767,900M503,865L630,868 643,865M917,790H880V818H865L863,862 885,880 890,900M763,845L785,868 840,870 863,862"],
  ["translate(900 0)", "M55,50V272M160,46V272M55,151H160M160,168L276,170M55,272H297M0,243H55M0,391H97V373H220M70,272L67,391 64,510M188,275V373M330,364H220V487M64,481L220,484 295,489M360,392L290,445 302,548M483,520H362V550H243M340,550V600L360,602V620H382V641H420V752M340,600V652H302V700M32,515L64,512M243,550V885M118,577H243M145,745L165,735 185,712 210,705 225,698 243,700 265,708 280,700 300,700M95,838H240M118,800L105,825 95,838V900M243,885H268V866H313M385,868V900"],
  ["translate(300 780)", "M55,135L155,138 170,142 180,135 200,148M199,85L205,88 202,190 200,297 197,390 203,395 200,512 197,655M199,85L330,88 350,88M345,85L350,90 347,183 332,185V215M350,132H463M463,60V187M433,188L578,190 600,222 637,205M433,188L432,245 436,250 434,350M332,215L432,222M202,190H268V212H332M318,215L322,245 318,345 321,395 320,545 330,550 328,655M55,272L197,277M200,297H318M55,370L197,373M203,395H320M55,470H200M203,512H320M55,567L198,572M463,328L680,332M463,328V460M521,190V328M565,330L564,400 566,465M508,466L837,472M722,471L720,555M507,550L720,555M400,550L398,655M544,555V655M718,555L715,655M837,350V560L832,565 833,655M680,272V470M637,150V250L680,272M680,289H811V349H963M463,65L490,90 545,90 560,80 578,85 590,115 612,148H740L757,150 765,140 843,138M697,58H840M695,50V150M740,152V289M797,289V226H928V256"],
  ["translate(1050 780)", "M90,0V105H120M95,105V138M120,226V86H320M235,88V243M178,226V256H220V290M220,243H355M178,293V322H205V349M178,293L220,290H322V360L328,400M328,398H380V278M380,384H487V275M487,290H562M562,447H535V472H497V460H467V384M652,533L705,612M652,533H605V610H487M215,349L220,400 235,425 255,440 257,458M202,547V460H270V470L330,472 342,513 350,550M320,470L322,445 330,435 328,398M202,547L360,552M342,513H458M497,472L480,480 458,513 475,560 487,595V610L470,640 467,655M535,610V818M535,690H590V680L640,685M360,552L362,590 370,600 373,655M230,547L227,655M88,350V525H202M88,525L83,655M492,265L538,200"],
];

const CITIES = [
  ["Des Moines", 936, 301, 942, 293],
  ["Lincoln", 664, 391, 669, 384],
  ["Springfield", 1286, 508, 1291, 501],
  ["Topeka", 755, 594, 761, 587],
  ["St Louis", 1237, 641, 1242, 634],
  ["Wichita", 609, 747, 614, 740],
  ["Tulsa", 727, 917, 733, 909],
];

function MapCanvas() {
  return (
    <svg viewBox="448 273 1017 698" preserveAspectRatio="xMidYMid slice" className="absolute inset-0 h-full w-full font-['Noto_Sans','Open_Sans',sans-serif]" role="img" aria-label="Map of Missouri counties shaded by schools per square kilometer">
      <defs>
        <filter id="ragged" x="-10%" y="-10%" width="120%" height="120%">
          <feTurbulence type="fractalNoise" baseFrequency="0.06" numOctaves="3" seed="4" result="n" />
          <feDisplacementMap in="SourceGraphic" in2="n" scale="48" xChannelSelector="R" yChannelSelector="G" />
        </filter>
        <filter id="winding" x="-5%" y="-5%" width="110%" height="110%">
          <feTurbulence type="fractalNoise" baseFrequency="0.05" numOctaves="2" seed="9" result="n" />
          <feDisplacementMap in="SourceGraphic" in2="n" scale="14" xChannelSelector="R" yChannelSelector="G" />
        </filter>
      </defs>
      <rect x="448" y="273" width="1017" height="699" fill="#f9f9f6" />

      <g filter="url(#ragged)" fill="#ebf2de">
        <path d="M850 895 900 880 1000 885 1120 878 1215 890 1200 915 1170 940 1130 975 810 975 838 930z" />
        <path d="M900 925 1010 905 1060 930 1050 975 900 975z" fill="#e0edd0" />
        <path d="M700 900 730 935 760 985 640 985 655 950 690 940z" />
        <path d="M770 940 830 950 800 985 770 985z" />
        <path d="M1215 905 1190 950 1210 930 1230 895z" />
        <path d="M1300 745 1320 740 1330 755 1390 755 1370 790 1340 760 1310 775z" />
        <path d="M1420 880 1450 850 1465 860 1465 975 1400 975 1380 960 1420 930z" />
        <path d="M1385 825 1420 810 1440 850 1420 860z" />
        <path d="M1450 785 1470 780 1470 820z" />
        <path d="M1205 450 1225 462 1215 475zM1170 500 1195 492 1190 505zM1155 520 1180 548 1170 540zM1185 550 1202 553 1205 605 1195 590z" />
        <path d="M1100 273 1140 280 1130 290zM860 278 880 300 900 330 870 310zM1180 290 1190 310 1175 300z" />
        <path d="M500 690 520 730 500 780 495 740zM650 660 690 690 655 690zM820 680 845 675 840 690z" />
      </g>
      <g fill="#eae7da">
        <path d="M712 328 730 325 742 332 735 350 715 348z" />
        <path d="M830 580 848 584 850 618 826 612z" />
        <path d="M660 385 672 382 670 396zM600 735 620 738 618 752 602 750zM720 905 738 908 736 922zM732 958 744 962 740 972z" />
        <path d="M925 290 948 294 945 312 928 306zM1240 640 1255 650 1252 662zM1278 505 1294 507 1290 518z" />
      </g>

      <g fill="none" stroke="#dedede" strokeWidth="1.400">
        <path d="M448 458 560 450 650 425 664 391 670 360 720 340 800 325 936 301 1050 325 1180 320 1250 290 1380 310 1465 300" />
        <path d="M936 273V301L930 420" />
        <path d="M448 600 600 592 755 594 800 600 835 592" />
        <path d="M755 594 720 650 609 747 580 850 540 972" />
        <path d="M730 666 768 657 795 644 800 636 835 610" />
        <path d="M448 765 609 747M609 747 640 900 620 972M727 917 790 870 848 822M727 917 600 940 540 972" />
        <path d="M1286 508V573L1278 587V603L1270 612 1240 640" />
        <path d="M1286 508 1300 470 1306 465 1302 415M1306 465 1340 435V423L1465 405M1340 423 1320 412 1288 412M1286 503 1380 506 1465 470" />
        <path d="M1240 640 1310 660 1340 668 1400 673 1465 720M1240 640 1330 605 1465 590M1346 680 1350 635 1380 605 1465 560" />
        <path d="M1290 660 1346 680 1351 682 1345 757 1330 775 1328 810M1351 682 1465 693M1345 757 1362 784 1372 811 1385 823 1430 816 1465 845" />
        <path d="M1266 934 1250 972M1360 972 1400 955 1465 945" />
        <path d="M860 273 850 330 742 335M742 335 730 400" />
        <path d="M1440 273 1420 400" />
      </g>

      <g fill="none" stroke="#c4e5f3" strokeWidth="1.400" filter="url(#winding)">
        <path d="M448 350 480 330 520 345 600 338 620 300 700 320 720 310" />
        <path d="M448 300 500 318 540 300 640 285 700 280" />
        <path d="M448 585 560 545 640 575 700 580 755 585 795 600 818 600 835 588" />
        <path d="M530 620 500 700 560 760 609 747 640 790 700 830 727 917 790 940 800 972" />
        <path d="M505 665 520 700 515 800 560 870 600 930 610 972" />
        <path d="M448 934 470 950 480 972M700 273 705 330 735 400" />
        <path d="M860 340 900 390 930 405M760 340 790 390 810 412M1000 273 1050 350 1105 412" />
        <path d="M1293 400 1285 418 1265 425 1235 467 1220 472 1203 500 1198 523 1203 540 1202 590 1208 604" />
        <path d="M1465 330 1420 340 1380 320 1293 400" />
        <path d="M1360 553 1355 570 1318 622 1310 645 1290 662 1272 672 1262 680 1260 700 1258 716" />
        <path d="M1465 385 1420 420 1400 440M1425 273 1430 300 1410 320" />
        <path d="M1383 817 1400 817 1420 840 1430 875 1428 900 1437 925 1430 972M1400 803 1412 803 1414 823 1426 823 1440 870 1465 889" />
        <path d="M920 880 900 895 898 920 905 945M1013 878 1030 900 1050 912 1075 945 1072 972" />
        <path d="M1214 880 1190 900 1168 906 1150 935 1140 965M1075 935 1090 955 1120 960" />
      </g>

      <g fill="none" stroke="#cdc1cf" strokeWidth="1.700">
        <g filter="url(#winding)">
          <path d="M640 273 660 300 667 335 685 352 700 375 720 388 730 405 745 418" />
          <path d="M1143 273 1160 300 1172 325 1170 350 1157 400 1155 408 1137 415 1133 422 1134 438 1129 442" />
          <path d="M1456 660 1432 690 1437 700 1427 720 1425 733 1427 740 1417 750 1425 768 1395 777 1387 792 1393 807 1390 815 1370 808 1345 798 1333 808 1325 825" />
          <path d="M1456 660 1445 620 1460 560 1440 480 1450 400 1435 330 1440 273" />
          <path d="M1282 935 1285 945 1277 945 1278 958 1260 962V972" />
        </g>
        <path d="M448 485H808M448 823H848" strokeDasharray="10 4" />
        <path d="M848 878 862 972M1425 733 1437 735 1440 722 1458 725 1460 732H1465" />
        <path d="M1308 878H1428V859H1446V863H1465" strokeDasharray="10 4" />
      </g>

      <g transform="translate(730 400) scale(0.3333)" strokeLinejoin="round">
        <polygon points={OUTLINE} fill="#ecf8fa" />
        <g stroke="#6b6b6b" strokeWidth="3.500">
          {SHADED.map(([fill, pts]) => <polygon key={pts} points={pts} fill={fill} />)}
        </g>
        <g fill="none" stroke="#6b6b6b" strokeWidth="3.500">
          {COUNTY_LINES.map(([t, d]) => <path key={d} transform={t || undefined} d={d} />)}
          <polygon points={OUTLINE} strokeWidth="4.200" />
        </g>
      </g>

      <g fill="#fff" stroke="#444" strokeWidth="2">
        {CITIES.filter(([n]) => n !== "St Louis").map(([n, x, y]) => <circle key={n} cx={x} cy={y} r="5" />)}
        <path d="M1238 636a5 5 0 0 1-2 10" fill="none" />
        <path d="M849 583a5 5 0 0 0 0 9" fill="none" />
      </g>
      <g fontSize="16" fill="#000" stroke="#fff" strokeWidth="3" strokeOpacity=".7" paintOrder="stroke">
        {CITIES.map(([n, , , tx, ty]) => <text key={n} x={tx} y={ty}>{n}</text>)}
        <text x="522" y="980">Oklahoma City</text>
      </g>
      <g fontSize="15" fill="#5a4060" letterSpacing="1">
        <text x="1295" y="479">Illinois</text>
        <text x="487" y="661">Kansas</text>
      </g>
      <g fontSize="15" fill="#555" fontStyle="italic" letterSpacing="1">
        <text x="664" y="725">Flint Hills</text>
        <text x="1018" y="890">Ozark</text>
        <text x="1010" y="910">Plateau</text>
      </g>
      <path d="M1012 860h56v17h-56z" fill="#ecf8fa" />
      <path d="M1005 878.500H1075" stroke="#6b6b6b" strokeWidth="1.500" />
      <text transform="translate(1320 627) rotate(-59)" fontSize="15" fontStyle="italic" fill="#3a86a8">Kaskaskia</text>
      <g className="font-['Liberation_Serif',serif]" fontSize="26" fill="#222" letterSpacing="12">
        <text x="436" y="470">TED</text>
        <text x="449" y="516">TES</text>
      </g>
      <text x="447" y="819" fontSize="14" fill="#444">s</text>
      <g>
        <path d="M1424 936h4v-3h12v3h14v22h-4v-3h-4v3h-5v-3h-4v3h-5v-3h-4v3h-4z" fill="#fff" stroke="#6b6b6b" strokeWidth="2" />
        <path d="M1429 943h20M1429 948h20M1429 953h20" stroke="#6b6b6b" strokeWidth="1.600" />
      </g>
    </svg>
  );
}

const Bar = () => <span className="h-[26px] w-[2px] shrink-0 bg-[#8e8e8e]" />;

function MapView() {
  return (
    <main className="flex min-w-0 flex-1 flex-col">
      <div className="flex h-[38px] shrink-0 items-center justify-between border-b-2 border-[#cfcfcf] pr-[6px]">
        <div className="flex h-[38px] items-center gap-[8px] bg-[#cccccc] pr-[9px] pl-[8px] text-[17px] text-[#6b6b6b]">
          <MapThumb />
          <span className="whitespace-nowrap">Map 3 - Schools per Kilometer</span>
          <button aria-label="Close map" className="ml-[6px]"><CloseX size={13} /></button>
        </div>
        <button aria-label="Open views"><Caret size={11} /></button>
      </div>
      <div className="flex min-h-0 flex-1 flex-col border-2 border-t-0 border-[#d8d8d8] bg-[#f7f9f8]">
        <div className="relative min-h-0 flex-1 overflow-hidden"><MapCanvas /></div>
        <div className="flex h-[35px] shrink-0 items-center pl-[7px] text-[17px] text-[#444]">
          <div className="relative h-[33px] w-[150px] shrink-0">
            <select aria-label="Map scale" className="h-full w-full appearance-none border-2 border-[#a6a6a6] bg-white pl-[7px] text-[17px]"><option>1:7,166,128</option></select>
            <span className="pointer-events-none absolute top-[14px] right-[8px]"><Caret size={7} /></span>
          </div>
          <div className="flex items-center pl-[7px]">
            <Bar />
            <button aria-label="Snapping" className="ml-[6px] flex h-[28px] w-[29px] items-center justify-center bg-[#a3d4f2]"><SnapIcon size={24} /></button>
            <button aria-label="Dynamic constraints" className="ml-[6px]">
              <svg width="24" height="24" viewBox="0 0 24 24">
                <path d="M1 4h6v5H1zM16 14h6v6h-6z" fill="none" stroke="#6b6b6b" strokeWidth="1.700" />
                <path d="M2 22 14 9M9 4h4M17 3v6M14 6h7" stroke="#4795d1" strokeWidth="2" />
                <path d="M1 21h5M13 22h8" stroke="#59a55b" strokeWidth="2.500" />
              </svg>
            </button>
            <button aria-label="Grid" className="ml-[10px]">
              <svg width="20" height="20" viewBox="0 0 20 20"><path d="M1 1h18v18H1zM5.500 1v18M10 1v18M14.500 1v18M1 5.500h18M1 10h18M1 14.500h18" fill="none" stroke="#949494" strokeWidth="1.400" /></svg>
            </button>
            <button aria-label="Inference" className="ml-[11px]">
              <svg width="24" height="24" viewBox="0 0 24 24">
                <path d="M0 0h11v11H0z" fill="#dcebd6" />
                <path d="M12 0v24M0 12h24" stroke="#6b6b6b" strokeWidth="1.500" strokeDasharray="4 2" />
                <path d="M10 10h4v4h-4z" fill="#fff" stroke="#444" strokeWidth="1.500" />
              </svg>
            </button>
            <button aria-label="Map correction" className="ml-[9px]">
              <svg width="26" height="26" viewBox="0 0 26 26">
                <path d="M2 20V7l7 13V7" fill="none" stroke="#4795d1" strokeWidth="2.600" />
                <path d="M13 1v24M13 25 24 11" stroke="#6b6b6b" strokeWidth="1.600" />
                <path d="M16 9c1-5 6-6 7-2s-3 6-6 5" fill="none" stroke="#4795d1" strokeWidth="2" />
              </svg>
            </button>
            <span className="ml-[9px] flex"><Bar /></span>
          </div>
          <div className="flex min-w-0 flex-1 items-center justify-center gap-4 pt-1">
            <span className="whitespace-nowrap">89.4543360°W 41.5939794°N</span>
            <button aria-label="Coordinate format"><Chevron turn="rotate-180" size={18} w={2.6} /></button>
          </div>
          <div className="flex shrink-0 items-center pr-[6px]">
            <Bar />
            <button className="ml-[8px] flex items-center gap-1 text-[#949494]">
              <svg width="26" height="26" viewBox="0 0 26 26" aria-hidden="true">
                <path d="M10 3h14v13H13z" fill="#eef2f3" stroke="#b7b7b7" strokeWidth="1.500" />
                <path d="M10 3l7 7 7-7" fill="none" stroke="#b7b7b7" strokeWidth="1.300" />
                <circle cx="9" cy="12" r="7" fill="#eef6fb" stroke="#94c4e6" strokeWidth="1.800" />
                <path d="M9 8v8M5 12h8" stroke="#94c4e6" strokeWidth="1.800" />
                <path d="M13 18l5 7" stroke="#d9b98f" strokeWidth="3" />
              </svg>
              <span className="whitespace-nowrap">Selected Features: 0</span>
            </button>
            <span className="ml-[10px] flex"><Bar /></span>
            <button aria-label="Pause drawing" className="ml-[11px] flex gap-[5px]">
              <span className="h-[21px] w-[6px] bg-[#6b6b6b]" />
              <span className="h-[21px] w-[6px] bg-[#6b6b6b]" />
            </button>
            <span className="ml-[13px] flex"><Bar /></span>
            <button aria-label="Refresh" className="ml-[8px]">
              <svg width="26" height="26" viewBox="0 0 26 26">
                <path d="M3 11C5 3 15 1 21 7M23 15c-2 8-12 10-18 4" fill="none" stroke="#4795d1" strokeWidth="3.600" />
                <path d="M24 1v11H13zM2 25V14h11z" fill="#4795d1" />
              </svg>
            </button>
          </div>
        </div>
      </div>
    </main>
  );
}

/* ---------- symbology ---------- */

const Combo = ({ id, value, indent }) => (
  <div className="relative h-[33px]">
    <select id={id} className={"h-full w-full appearance-none border-2 border-[#a9a9a9] bg-white text-[17px] " + (indent ? "pl-[7px]" : "pl-[2px]")}>
      <option>{value}</option>
    </select>
    <span className="pointer-events-none absolute top-[13px] right-[8px]"><Caret /></span>
  </div>
);

const FieldRow = ({ id, label, value, height, indent, side }) => (
  <div className={"grid grid-cols-[133px_minmax(0,1fr)_46px] items-center " + height}>
    <label htmlFor={id}>{label}</label>
    <Combo id={id} value={value} indent={indent} />
    <div className="pl-[11px]">{side}</div>
  </div>
);

function Symbology() {
  return (
    <aside className="flex w-[431px] shrink-0 flex-col text-[17px] text-[#4c4c4c]">
      <div className="flex min-h-0 flex-1 flex-col border-2 border-[#d8d8d8] bg-[#f7f9f8]">
        <div className="h-[6px] shrink-0 bg-[#0078d0]" />
        <div className="flex h-[52px] shrink-0 justify-between pr-[7px] pl-[8px]">
          <h2 className="w-[336px] truncate text-[23px] leading-[30px] text-[#0078d0]">Symbology - Schools_by_Counties</h2>
          <PaneButtons />
        </div>
        <div className="flex items-center justify-between pr-[12px] pl-[14px]">
          <IconTabs items={[["Primary symbology", <PrimaryIcon key="a" />], ["Vary symbology", <VaryIcon key="b" />], ["Symbol layer drawing", <LayerDrawIcon key="c" />], ["Display filters", <Funnel key="d" size={30} />], ["Advanced options", <LegendBrushIcon key="e" />]]} />
          <button aria-label="Menu" className="flex flex-col gap-[4px]">
            <span className="h-[4px] w-[21px] rounded-full bg-[#5f5f5f]" />
            <span className="h-[4px] w-[21px] rounded-full bg-[#5f5f5f]" />
            <span className="h-[4px] w-[21px] rounded-full bg-[#5f5f5f]" />
          </button>
        </div>
        <div className="flex min-h-0 flex-1 flex-col pr-[8px] pl-[8px]">
          <h3 className="pt-[13px] text-[20px] leading-[32px] font-semibold text-[#444]"><label htmlFor="primary">Primary symbology</label></h3>
          <div className="mt-[6px]"><Combo id="primary" value="Graduated Colors" /></div>
          <div className="mt-[5px] flex flex-col">
            <FieldRow id="field" label="Field" value="Join_Count" height="h-[43px]" side={
              <button aria-label="Set an expression" className="block">
                <svg width="24" height="24" viewBox="0 0 24 24"><path d="M1 1h22v22H1z" fill="#fbfbfb" stroke="#6b6b6b" strokeWidth="2" /><path d="M5 7c3-4 5 0 7 4s5 8 8 3M19 5 6 18" fill="none" stroke="#4d9d52" strokeWidth="1.500" /></svg>
              </button>
            } />
            <FieldRow id="norm" label="Normalization" value="SQKM" height="h-[44px]" />
            <FieldRow id="method" label="Method" value="Natural Breaks (Jenks)" height="h-[42px]" />
            <FieldRow id="classes" label="Classes" value="5" height="h-[41px]" indent />
            <div className="grid h-[42px] grid-cols-[133px_minmax(0,1fr)_46px] items-center">
              <span id="scheme">Color scheme</span>
              <button aria-labelledby="scheme" className="flex h-[36px] items-center justify-between border-2 border-[#a9a9a9] pr-[8px] pl-[4px]">
                <span className="flex h-[25px] w-[199px]">
                  <span className="w-[45px] bg-[#ecf8fa]" />
                  <span className="w-[44px] bg-[#b2e2e2]" />
                  <span className="w-[45px] bg-[#66c2a4]" />
                  <span className="w-[45px] bg-[#2ca25f]" />
                  <span className="w-[20px] bg-[#006d2c]" />
                </span>
                <Caret />
              </button>
              <button aria-label="Color scheme options" className="pl-[11px]">
                <svg width="26" height="26" viewBox="0 0 26 26">
                  <path d="M11.500 1h3l1 4 3 1 3-2 2 2-2 3 1 3 4 1v0.500l-4 1.500-1 3 2 3-2 2-3-2-3 1-1 4h-3l-1-4-3-1-3 2-2-2 2-3-1-3-4-1.500V13l4-1 1-3-2-3 2-2 3 2 3-1z" fill="#d9d9d9" stroke="#6b6b6b" strokeWidth="1.500" />
                  <circle cx="13" cy="13.500" r="4" fill="#f7f9f8" stroke="#6b6b6b" strokeWidth="1.500" />
                </svg>
              </button>
            </div>
          </div>
          <div className="mt-[14px] flex h-[14px] shrink-0 items-start justify-center gap-[2px] border-y-[3px] border-[#cfcfcf] pl-[6px]">
            <span className="h-[6px] w-[8px] rounded-full bg-[#cacaca]" />
            <span className="h-[6px] w-[8px] rounded-full bg-[#cacaca]" />
            <span className="h-[6px] w-[8px] rounded-full bg-[#cacaca]" />
          </div>
          <div role="tablist" className="mt-[15px] flex shrink-0 items-end">
            <button role="tab" aria-selected="true" className="-mb-[2px] h-[38px] w-[85px] border-2 border-b-0 border-[#b5b5b5] bg-[#f9f9f9]">Classes</button>
            <button role="tab" aria-selected="false" className="h-[33px] w-[104px] border-2 border-b-0 border-l-0 border-[#b5b5b5] bg-[#f2f2f2] text-center">Histogram</button>
            <button role="tab" aria-selected="false" className="h-[33px] w-[70px] border-2 border-b-0 border-l-0 border-[#b5b5b5] bg-[#f2f2f2]">Scales</button>
          </div>
          <div className="mr-[2px] mb-[10px] flex min-h-0 flex-1 flex-col border-2 border-[#b5b5b5] bg-[#f9f9f9] px-[10px] pb-[5px]">
            <button className="mt-[16px] mr-[5px] flex items-center gap-[12px] self-end leading-[26px]">More <Caret size={10} /></button>
            <div className="mt-[13px] grid min-h-0 flex-1 grid-cols-[minmax(0,1fr)_26px] grid-rows-[minmax(0,1fr)_26px] border-2 border-[#c9c9c9]">
              <div className="min-h-0 overflow-hidden">
                <table className="w-[455px] table-fixed border-collapse text-left">
                  <thead className="bg-[#dfdfdf] text-[#333]">
                    <tr className="h-[33px]">
                      <th className="w-[119px] border-r-2 border-b border-[#c9c9c9] pl-[9px] text-base font-normal">Symbol</th>
                      <th className="w-[150px] border-r-2 border-b border-[#c9c9c9] pr-[8px] pl-[9px] text-base font-normal"><span className="flex items-center justify-between">Upper value <Caret up size={9} /></span></th>
                      <th className="border-b border-[#c9c9c9] pl-[9px] text-base font-normal">Label</th>
                    </tr>
                  </thead>
                  <tbody>
                    {CLASSES.slice(0, 3).map(([bg, label, upper], i) => (
                      <tr key={label} className={"h-[42px] " + (i % 2 ? "bg-[#ebebeb]" : "bg-white")}>
                        <td className="border-r-2 border-b-2 border-[#c9c9c9] pr-[11px] pl-[30px]">
                          <button aria-label={"Symbol for " + label} className="flex w-full items-center justify-between">
                            <span className={"h-[24px] w-[30px] border-2 border-[#7d8583] " + bg} /> <Caret size={7} />
                          </button>
                        </td>
                        <td className="border-r-2 border-b-2 border-[#c9c9c9] pl-[14px]"><span className="flex items-center gap-[16px] text-base"><span>≤</span>{upper}</span></td>
                        <td className="border-b-2 border-[#c9c9c9] pl-[5px] text-base whitespace-nowrap">{label}</td>
                      </tr>
                    ))}
                  </tbody>
                </table>
              </div>
              <div className="flex min-h-0 flex-col items-center bg-[#ebebeb]">
                <div className="h-[33px] w-full shrink-0 bg-[#f9f9f9]" />
                <button aria-label="Scroll up" className="my-[6px]"><Chevron size={13} w={2} /></button>
                <span className="mt-[3px] h-[32px] w-[14px] rounded-full bg-[#b3b3b3]" />
              </div>
              <div className="flex items-center justify-between bg-[#ebebeb] px-[6px]">
                <button aria-label="Scroll left"><Chevron turn="-rotate-90" size={13} /></button>
                <span className="mr-[36px] ml-[6px] h-[14px] flex-1 rounded-full bg-[#b3b3b3]" />
                <button aria-label="Scroll right"><Chevron turn="rotate-90" size={13} /></button>
              </div>
              <button aria-label="Scroll down" className="flex items-center justify-center bg-[#ebebeb]"><Chevron turn="rotate-180" size={13} /></button>
            </div>
          </div>
        </div>
      </div>
      <div className="flex h-[33px] pl-[9px]">
        <button className="w-[70px] pr-[10px]">Catalog</button>
        <button className="-mt-[2px] h-[35px] w-[110px] border-2 border-t-0 border-[#d8d8d8] bg-[#f7f9f8] pr-[4px] text-[#0078d0]">Symbology</button>
      </div>
    </aside>
  );
}

export default function App() {
  return (
    <div className={"flex h-screen flex-col overflow-hidden bg-[#f1f1f1] " + UI_FONT}>
      <Header />
      <Ribbon />
      <div className="flex min-h-0 flex-1 gap-[9px] pt-[9px] pb-[6px] pl-[6px]">
        <Contents />
        <MapView />
        <Symbology />
      </div>
    </div>
  );
}
